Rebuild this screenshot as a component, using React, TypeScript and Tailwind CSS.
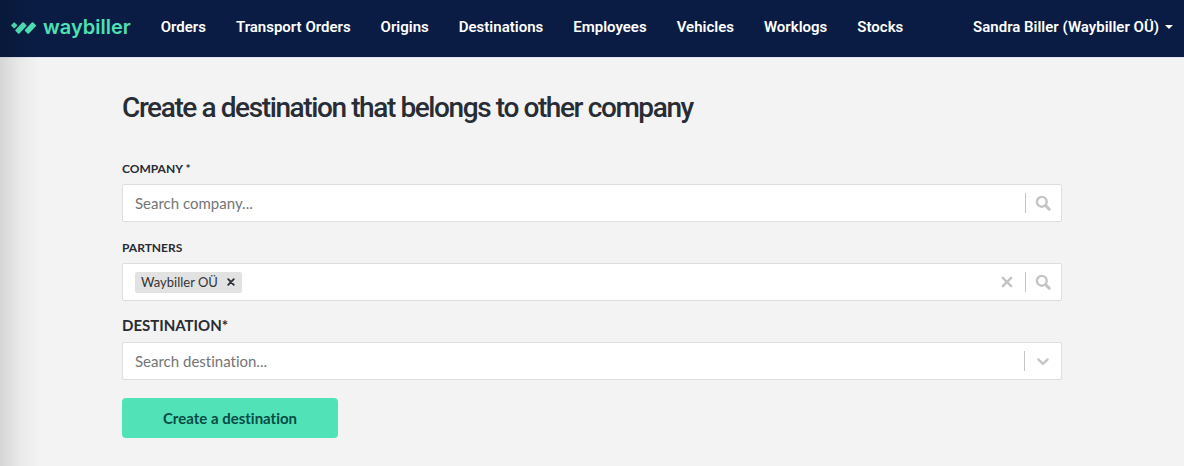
import { useState } from 'react'
import type { ReactNode } from 'react'

const navItems = ['Orders', 'Transport Orders', 'Origins', 'Destinations', 'Employees', 'Vehicles', 'Worklogs', 'Stocks']

function SearchIcon() {
  return (
    <svg width="16" height="16" viewBox="0 0 16 16" fill="none" stroke="currentColor" aria-hidden="true">
      <circle cx="6.8" cy="6.8" r="4.9" strokeWidth="2.4" />
      <path d="M10.6 10.6 14.2 14.2" strokeWidth="3" strokeLinecap="round" />
    </svg>
  )
}

function CrossIcon({ size, width }: { size: number; width: number }) {
  return (
    <svg width={size} height={size} viewBox="0 0 10 10" fill="none" stroke="currentColor" strokeWidth={width} strokeLinecap="round" aria-hidden="true">
      <path d="M1.5 1.5l7 7M8.5 1.5l-7 7" />
    </svg>
  )
}

function ChevronIcon() {
  return (
    <svg width="20" height="20" viewBox="0 0 20 20" fill="currentColor" aria-hidden="true">
      <path d="M4.516 7.548c0.436-0.446 1.043-0.481 1.576 0l3.908 3.747 3.908-3.747c0.533-0.481 1.141-0.446 1.574 0 0.436 0.445 0.408 1.197 0 1.615-0.406 0.418-4.695 4.502-4.695 4.502-0.217 0.223-0.502 0.335-0.787 0.335s-0.57-0.112-0.789-0.335c0 0-4.287-4.084-4.695-4.502s-0.436-1.17 0-1.615z" />
    </svg>
  )
}

function Logo() {
  return (
    <a href="#" className="flex items-center gap-1.5 text-[#4fe0b5]">
      <svg width="26" height="14" viewBox="0 0 26 14" fill="currentColor" aria-hidden="true">
        <rect x="-2.4" y="-2.4" width="4.8" height="4.8" rx="1" transform="translate(3.2 5.4) rotate(45)" />
        <rect x="-5.9" y="-2.7" width="11.8" height="5.4" rx="1" transform="translate(9.9 8) rotate(-46)" />
        <rect x="-5.9" y="-2.7" width="11.8" height="5.4" rx="1" transform="translate(19.4 8) rotate(-46)" />
      </svg>
      <span className="font-['Inter'] text-xl leading-6 font-semibold">waybiller</span>
    </a>
  )
}

function Control({ children, action }: { children: ReactNode; action: ReactNode }) {
  return (
    <div className="flex h-[38px] items-center rounded-[2px] border border-[#dedede] bg-white pl-3 text-[#c4c4c4]">
      {children}
      <span className="my-2 w-px self-stretch bg-[#c4c4c4]" />
      {action}
    </div>
  )
}

const inputClass = 'min-w-0 flex-1 bg-transparent text-[#333] outline-none placeholder:text-[#757575]'

export default function App() {
  const [company, setCompany] = useState('')
  const [partners, setPartners] = useState(['Waybiller OÜ'])
  const [partnerQuery, setPartnerQuery] = useState('')
  const [destination, setDestination] = useState('')

  return (
    <div className="relative min-h-screen bg-[#f3f3f3] font-['Lato',sans-serif] text-[15px] leading-5 text-[#272c35] [font-variant-ligatures:none]">
      {/* Top bar */}
      <header className="flex h-[58px] items-center justify-between border-b border-[#e4e4f0] bg-[#0a1c43] pr-[11px] pb-[3px] pl-[11px] font-['Roboto',sans-serif] font-semibold text-white">
        <div className="flex items-center gap-[30px]">
          <Logo />
          <nav className="flex gap-[30px]">
            {navItems.map(item => (
              <a key={item} href="#" className="whitespace-nowrap">{item}</a>
            ))}
          </nav>
        </div>
        <button type="button" className="flex items-center gap-1.5 whitespace-nowrap">
          Sandra Biller (Waybiller OÜ)
          <span className="border-x-4 border-t-4 border-x-transparent border-t-white" />
        </button>
      </header>

      {/* Form */}
      <main className="mx-auto max-w-[970px] px-[15px] pt-8">
        <h1 className="font-['Roboto',sans-serif] text-[28px] leading-9 font-medium tracking-tighter">
          Create a destination that belongs to other company
        </h1>
        <form className="pt-[35px]" onSubmit={e => e.preventDefault()}>
          <label htmlFor="company" className="mb-[7px] block text-xs leading-4 font-bold">COMPANY *</label>
          <Control
            action={<button type="button" aria-label="Search company" className="pr-[10px] pl-[9px]"><SearchIcon /></button>}
          >
            <input id="company" className={inputClass} placeholder="Search company..." value={company} onChange={e => setCompany(e.target.value)} />
          </Control>

          <label htmlFor="partners" className="mt-[18px] mb-[7px] block text-xs leading-4 font-bold">PARTNERS</label>
          <Control
            action={<button type="button" aria-label="Search partners" className="pr-[10px] pl-[9px]"><SearchIcon /></button>}
          >
            {partners.map(p => (
              <span key={p} className="flex h-[21px] items-center rounded-[2px] bg-[#e2e2e2] pl-1.5 text-[13px] text-[#333]">
                {p}
                <button type="button" aria-label={`Remove ${p}`} className="pr-[7px] pl-[9px] text-[#272c35]" onClick={() => setPartners(partners.filter(x => x !== p))}>
                  <CrossIcon size={8} width={2.2} />
                </button>
              </span>
            ))}
            <input id="partners" className={inputClass} value={partnerQuery} onChange={e => setPartnerQuery(e.target.value)} />
            <button type="button" aria-label="Clear partners" className="px-3" onClick={() => setPartners([])}>
              <CrossIcon size={12} width={2} />
            </button>
          </Control>

          <label htmlFor="destination" className="mt-[14px] mb-[7px] block font-bold">DESTINATION*</label>
          <Control
            action={<button type="button" aria-label="Show destinations" className="px-2"><ChevronIcon /></button>}
          >
            <input id="destination" className={inputClass} placeholder="Search destination..." value={destination} onChange={e => setDestination(e.target.value)} />
          </Control>

          <button type="submit" className="mt-[18px] h-10 min-w-[216px] rounded-[4px] bg-[#52e2b8] px-10 font-bold text-[#064b44]">
            Create a destination
          </button>
        </form>
      </main>

      {/* Shadow along the left edge */}
      <div className="pointer-events-none absolute inset-y-0 left-0 w-10 bg-linear-to-r from-black/12 via-black/4 to-transparent" />
    </div>
  )
}
